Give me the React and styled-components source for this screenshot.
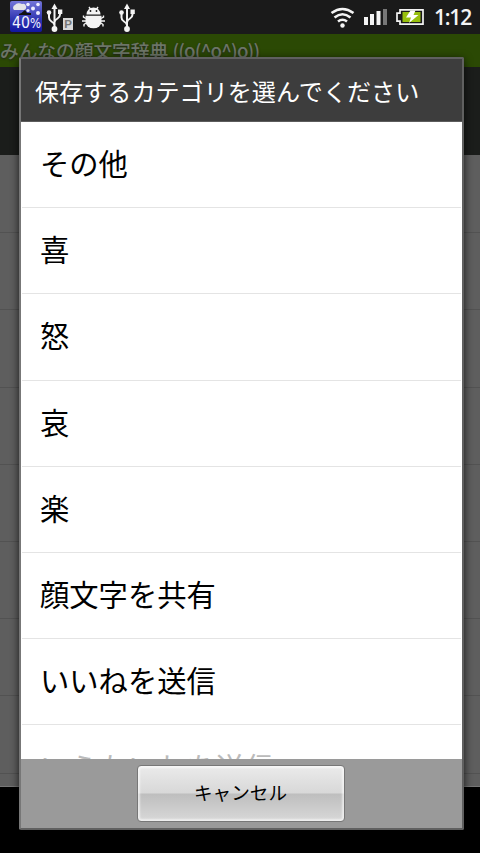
import React from 'react'
import styled, { createGlobalStyle } from 'styled-components'

const Global = createGlobalStyle`
  * { box-sizing: border-box; }
  body { margin: 0; background: #000; overflow: hidden; }
`

const Screen = styled.div`
  position: relative;
  width: 480px;
  height: 853px;
  overflow: hidden;
  background: #000;
  font-family: 'Noto Sans CJK JP', sans-serif;
`

const StatusBar = styled.div`
  display: flex;
  justify-content: space-between;
  height: 34px;
  background: #1a1a1a;
`

const Clock = styled.div`
  width: 46px;
  color: #f4f4f4;
  font: 600 21px/34px 'Open Sans', sans-serif;
  letter-spacing: -1.2px;
  white-space: nowrap;
`

const Right = styled.div`
  display: flex;
`

const AppTitle = styled.div`
  height: 33px;
  background: #2b4904;
  color: #6c7567;
  font-size: 18.7px;
  font-weight: 500;
  line-height: 31px;
  white-space: nowrap;
  text-shadow: 0 1px 2px #222;
`

const Face = styled.span`
  letter-spacing: -0.8px;
`

const Tabs = styled.div`
  height: 88px;
  background: #1b1d1b;
`

const BackList = styled.div`
  height: 632px;
  padding-top: 1px;
  background: #5e5e5e;
  border-bottom: 1px solid #777;
`

const BackRow = styled.div`
  height: 77.2px;
  border-bottom: 1px solid #525252;
`

const Dialog = styled.div`
  position: absolute;
  left: 19px;
  top: 57px;
  width: 445px;
  height: 773px;
  display: flex;
  flex-direction: column;
  border: 2px solid #606060;
  border-left-color: #777;
  border-radius: 2px;
  background: #fff;
  box-shadow: 0 2px 9px rgba(0, 0, 0, 0.75);
`

const DialogTitle = styled.div`
  flex: none;
  height: 63px;
  padding-left: 14px;
  background: #3d3d3d;
  border-bottom: 1px solid #5c5c5c;
  color: #fff;
  font-size: 24.1px;
  line-height: 64px;
  white-space: nowrap;
`

const Options = styled.div`
  flex: none;
  height: 637px;
  padding: 0 1px;
  overflow: hidden;
`

const Option = styled.div`
  height: 86.2px;
  padding-left: 18px;
  border-bottom: 1px solid #e4e4e4;
  color: ${props => props.$faded ? '#bbb' : '#000'};
  font-size: 29.3px;
  line-height: ${props => props.$faded ? '83px' : '80px'};
  white-space: nowrap;
`

const Footer = styled.div`
  flex: 1;
  display: flex;
  justify-content: center;
  padding: 6px 2px 0 0;
  background: #9a9a9a;
`

const Button = styled.button`
  width: 208px;
  height: 57px;
  padding: 0 0 4px;
  border: 1px solid #777;
  border-radius: 4px;
  background: linear-gradient(#ebebeb, #d8d8d8 49%, #bebebe 51%, #d8d8d8);
  box-shadow: inset 0 0 2px 2px rgba(255, 255, 255, 0.6);
  color: #000;
  font: 400 18.6px/52px 'Noto Sans CJK JP', sans-serif;
`

const options = ['その他', '喜', '怒', '哀', '楽', '顔文字を共有', 'いいねを送信']

// x is the centre of the stem
const Usb = ({ x }) => (
  <g transform={`translate(${x} 0)`} stroke='#f4f4f4' fill='none' strokeWidth='2'>
    <path d='M0 7v21M0 25q-.5-2-3-3.5-2.5-1.500-2.500-4v-5M0 22q.5-2 3-3.500 2.500-1.500 2.500-4v-3' />
    <path d='M0 3.500l3 5.500h-6z' fill='#f4f4f4' stroke='none' />
    <circle cx='0' cy='29' r='2.9' fill='#f4f4f4' stroke='none' />
    <circle cx='-5.5' cy='12.5' r='2.3' fill='#f4f4f4' stroke='none' />
    <path d='M3.5 9.500h4.300v4.500h-4.300z' fill='#f4f4f4' stroke='none' />
  </g>
)

const LeftIcons = () => (
  <svg width='150' height='34' viewBox='0 0 150 34'>
    <defs>
      <linearGradient id='weather' x1='0' y1='0' x2='0' y2='1'>
        <stop offset='0' stopColor='#7476d8' />
        <stop offset='0.55' stopColor='#3439b4' />
        <stop offset='1' stopColor='#1116a0' />
      </linearGradient>
    </defs>
    <rect x='10' y='1' width='32' height='31' rx='2' fill='url(#weather)' />
    <path d='M14 10a3 3 0 0 1 1-5 5 4 0 0 1 7-1 3 3 0 0 1 2 6z' fill='#e4e4e8' />
    <g fill='#eef'>
      <circle cx='28' cy='4.5' r='1.8' />
      <circle cx='33' cy='8.5' r='2' />
      <circle cx='38' cy='4.5' r='1.8' />
      <circle cx='28' cy='10.500' r='1.6' />
      <circle cx='38' cy='13' r='2' />
    </g>
    <path d='M19 14q3-1 6-4l2 3h4v2H19z' fill='#111' />
    <g fill='#f0f2ff' fontFamily='DejaVu Sans'>
      <text x='12' y='28' fontSize='16.5' textLength='18' lengthAdjust='spacingAndGlyphs'>40</text>
      <text x='30' y='27.5' fontSize='13.5' textLength='11' lengthAdjust='spacingAndGlyphs'>%</text>
    </g>
    <Usb x={54.5} />
    <rect x='63' y='18' width='10' height='12' fill='#d8d8d8' />
    <text x='64.3' y='28' fill='#777' fontFamily='Liberation Sans' fontWeight='bold' fontSize='11.5'>P</text>
    <g fill='#f4f4f4'>
      <path d='M86.500 14.500a7 7 0 0 1 14 0z' />
      <path d='M85.500 15.800h16v6a8 6.500 0 0 1-16 0z' />
      <path d='M89 7l2 3M98 7l-2 3M86 18.500l-2.500-1.500v-1.500M86 21h-4M86 23l-2 1.500v2M101 18.500l2.500-1.500v-1.500M101 21h4M101 23l2 1.500v2' stroke='#f4f4f4' strokeWidth='1.4' fill='none' />
    </g>
    <circle cx='90.5' cy='11' r='0.9' fill='#1a1a1a' />
    <circle cx='96.5' cy='11' r='0.9' fill='#1a1a1a' />
    <Usb x={127} />
  </svg>
)

const RightIcons = () => (
  <svg width='104' height='34' viewBox='330 0 104 34'>
    <g fill='none' stroke='#f4f4f4' strokeWidth='2.6'>
      <path d='M331.5 13q11-8 22 0' />
      <path d='M334.5 17.5q8-6.5 16 0' />
      <path d='M338 21.5q4.5-3.5 9 0' />
    </g>
    <circle cx='342.5' cy='25.5' r='2.2' fill='#f4f4f4' />
    <g fill='#f4f4f4'>
      <rect x='364' y='17' width='4' height='8' />
      <rect x='370' y='14' width='4' height='11' />
      <rect x='376.5' y='11' width='4' height='14' />
      <rect x='383' y='9' width='4' height='16' fill='#777' />
    </g>
    <path d='M400 9.8h23v14.4h-23v-3h-3v-8h3z' fill='#1a1a1a' stroke='#f4f4f4' strokeWidth='1.7' />
    <rect x='402.5' y='12' width='18' height='10' fill='#97bf0d' />
    <path d='M410.5 10.5h5l-2 4.5h5l-9.5 8 2-5.5h-5z' fill='#fff' />
  </svg>
)

const App = () => (
  <Screen>
    <Global />
    <StatusBar>
      <LeftIcons />
      <Right>
        <RightIcons />
        <Clock>1:12</Clock>
      </Right>
    </StatusBar>
    <AppTitle>みんなの顔文字辞典 <Face>((o(^o^)o))</Face></AppTitle>
    <Tabs />
    <BackList>
      {[0, 1, 2, 3, 4, 5, 6, 7].map(n => <BackRow key={n} />)}
    </BackList>
    <Dialog>
      <DialogTitle>保存するカテゴリを選んでください</DialogTitle>
      <Options>
        {options.map(name => <Option key={name}>{name}</Option>)}
        <Option $faded>いらないねを送信</Option>
      </Options>
      <Footer>
        <Button>キャンセル</Button>
      </Footer>
    </Dialog>
  </Screen>
)

export default App
